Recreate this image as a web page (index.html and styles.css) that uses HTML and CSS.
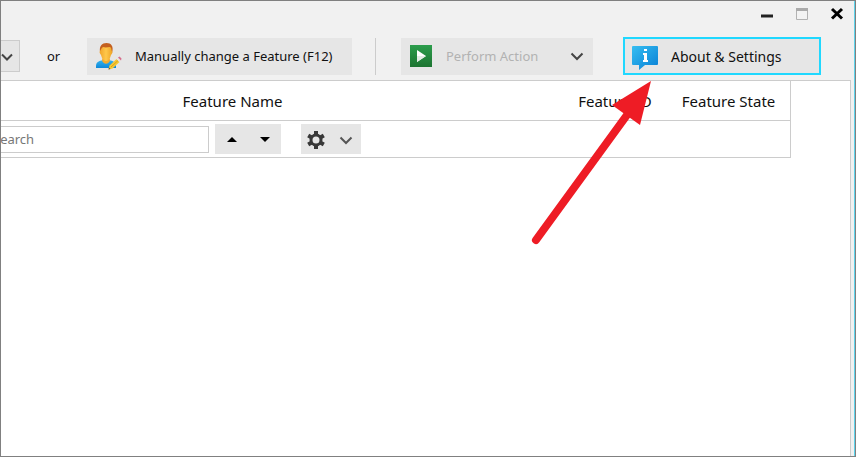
FILE: index.html
```html
<!DOCTYPE html>
<html lang="en">
<head>
<meta charset="utf-8">
<title>Features</title>
<link rel="stylesheet" href="styles.css">
</head>
<body>
<div class="window">
  <header class="titlebar">
    <button class="caption" aria-label="Minimize"><svg width="14" height="14" viewBox="0 0 14 14"><path d="M1 9h12" stroke="#222" stroke-width="3"/></svg></button>
    <button class="caption" aria-label="Maximize" disabled><svg width="14" height="14" viewBox="0 0 14 14"><path d="M1.500 1.500h11v11h-11z" fill="#f3f3f3" stroke="#b2b2b2"/><path d="M1 1h12v3H1z" fill="#aaa"/></svg></button>
    <button class="caption" aria-label="Close"><svg width="14" height="14" viewBox="0 0 14 14"><path d="M2 2l10 9.500M12 2L2 11.500" stroke="#000" stroke-width="3"/></svg></button>
  </header>
  <div class="toolbar">
    <div class="picker">
      <select class="picker-select" aria-label="Feature preset"><option></option></select>
      <svg class="picker-arrow" width="14" height="14" viewBox="0 0 14 14"><path d="M2 4.500l5 5 5-5" fill="none" stroke="#444" stroke-width="2"/></svg>
    </div>
    <span class="or">or</span>
    <button class="tool manual">
      <svg width="28" height="28" viewBox="0 0 28 28">
        <defs>
          <linearGradient id="face" x2="1" y2="0"><stop stop-color="#f0a32a"/><stop offset=".5" stop-color="#ffc84b"/><stop offset="1" stop-color="#eda225"/></linearGradient>
          <linearGradient id="shirt" x2="0" y2="1"><stop stop-color="#35b4ee"/><stop offset="1" stop-color="#0e88d9"/></linearGradient>
        </defs>
        <path d="M1 26v-2c0-4 3-5 7-6h6c4 1 7 2 7 6v2z" fill="url(#shirt)"/>
        <path d="M7 18l1-3h6l1 3c-1 5-7 5-8 0z" fill="#f2ab2e"/>
        <path d="M5 10C4 4 7 1 11.500 1S19 4 17 11z" fill="#c4601f"/>
        <path d="M5 9c1-1 1-3 3-4 3 1 5 0 7 0 2 1 1 3 2 4 1 1 0 3-1 4-1 4-3 6-5 6s-4-2-5-6c-1-1-2-3-1-4z" fill="url(#face)"/>
        <path d="M13.500 27.500l1-4 7-6.500 3 3-7 6.500z" fill="#f5c832"/>
        <path d="M16 25l7-6.500" stroke="#dda01b"/>
        <path d="M21.500 17l1.500-1.500 3 3-1.500 1.500z" fill="#e8e3e0"/>
        <path d="M23 15.500l1.500-1 2 2-.5 2z" fill="#d66c8b"/>
        <path d="M13.500 27.500l.5-2 1.500 1.500z" fill="#5b5242"/>
      </svg>
      <span>Manually change a Feature (F12)</span>
    </button>
    <span class="separator"></span>
    <button class="tool perform" disabled>
      <svg width="24" height="24" viewBox="0 0 24 24">
        <defs><linearGradient id="green" x2="0" y2="1"><stop stop-color="#2c9d4c"/><stop offset="1" stop-color="#1d7431"/></linearGradient></defs>
        <rect x="1" y="1" width="22" height="22" fill="url(#green)"/><path d="M8 6l9 6-9 6z" fill="#fff"/><path d="M8 12h9l-9 6z" fill="#e3ece5"/>
      </svg>
      <span>Perform Action</span>
      <svg class="chevron" width="14" height="14" viewBox="0 0 14 14"><path d="M1.500 4.500l5.500 5.500 5.500-5.500" fill="none" stroke="#444" stroke-width="2"/></svg>
    </button>
    <button class="tool about">
      <svg width="28" height="28" viewBox="0 0 28 28">
        <defs><linearGradient id="bubble" x2="1" y2="1"><stop stop-color="#36bef1"/><stop offset="1" stop-color="#087fd5"/></linearGradient></defs>
        <path d="M2 4h24q1 0 1 1v17q0 1-1 1H14l-6 5v-5H2q-1 0-1-1V5q0-1 1-1z" fill="url(#bubble)"/>
        <path d="M13 7h3v2h-3zM12 11h4v7h1v2h-5v-2h1v-5h-1z" fill="#fff"/>
      </svg>
      <span>About &amp; Settings</span>
    </button>
  </div>
  <main class="workspace">
    <table class="features">
      <thead>
        <tr><th>Feature Name</th><th class="col-id">Feature ID</th><th class="col-state">Feature State</th></tr>
      </thead>
      <tbody>
        <tr><td colspan="3">
          <div class="filter">
            <input class="search" type="text" placeholder="Search" aria-label="Search">
            <div class="group steps">
              <button class="mini" aria-label="Previous match"><svg width="14" height="14" viewBox="0 0 14 14"><path d="M2 10l5-5 5 5z"/></svg></button>
              <button class="mini" aria-label="Next match"><svg width="14" height="14" viewBox="0 0 14 14"><path d="M2 5l5 5 5-5z"/></svg></button>
            </div>
            <button class="group options" aria-label="Search options">
              <svg width="20" height="20" viewBox="0 0 20 20"><g fill="none" stroke="#383838"><circle cx="10" cy="11" r="5" stroke-width="3"/><path d="M10 2v4M10 16v4M2.200 6.500l3.500 2M14.300 13.500l3.500 2M2.200 15.500l3.500-2M14.300 8.500l3.500-2" stroke-width="4"/></g></svg>
              <svg width="14" height="14" viewBox="0 0 14 14"><path d="M1.500 5.500l5.500 5.500 5.500-5.500" fill="none" stroke="#555" stroke-width="2"/></svg>
            </button>
          </div>
        </td></tr>
      </tbody>
    </table>
  </main>
  <svg class="pointer" width="124" height="170" viewBox="0 0 124 170" aria-hidden="true">
    <path d="M6 162L97 37" stroke="#ee1c25" stroke-width="8" stroke-linecap="round"/>
    <path d="M121 3L82 27l28 20z" fill="#ee1c25"/>
  </svg>
</div>
</body>
</html>
```
FILE: styles.css
```css
* { box-sizing: border-box; }
body { margin: 0; font-family: "Noto Sans", sans-serif; font-size: 13px; color: #111; }
button, input, select { font: inherit; color: inherit; margin: 0; }
button { border: 0; padding: 0; }
svg { display: block; flex: none; }
.window { position: relative; display: flex; flex-direction: column; min-height: 100vh; overflow: hidden; background: #f1f1f1; border: 1px solid #808080; box-shadow: inset -1px 0 #5ed4ec; }
.titlebar { display: flex; justify-content: flex-end; gap: 21px; height: 36px; padding: 6px 11px 0 0; }
.caption { width: 14px; height: 14px; background: none; }
.toolbar { display: flex; align-items: center; height: 38px; margin-bottom: 5px; padding-right: 34px; white-space: nowrap; }
.picker { position: relative; flex: none; width: 119px; margin-left: -100px; }
.picker-select { display: block; width: 100%; height: 32px; appearance: none; background: #e6e6e6; border: 1px solid #ccc; border-radius: 0; }
.picker-arrow { position: absolute; right: 6px; top: 10px; pointer-events: none; }
.or { width: 67px; text-align: center; }
.tool { display: flex; align-items: center; height: 37px; padding: 0 8px; background: #e6e6e6; }
.manual { gap: 12px; width: 265px; }
.separator { width: 1px; height: 37px; margin: 0 25px 0 23px; background: #ccc; }
.perform { gap: 13px; width: 192px; color: #b2b2b2; }
.chevron { margin: 0 1px 0 auto; }
.about { gap: 12px; width: 198px; height: 38px; margin-left: auto; border: 2px solid #20d8ff; padding: 0 6px; font-size: 14px; }
.workspace { flex: 1; margin: 0 4px 0 -100px; padding-right: 59px; background: #fff; border: 1px solid #ccc; border-bottom: 0; }
.features { width: 100%; table-layout: fixed; border-collapse: separate; border-spacing: 0; border-right: 1px solid #ccc; border-bottom: 1px solid #ccc; }
th { height: 40px; padding: 0; border-bottom: 1px solid #ccc; font-size: 15px; font-weight: 400; }
td { padding: 0; }
.col-id { width: 104px; }
.col-state { width: 123px; }
.filter { display: flex; align-items: center; height: 36px; padding-left: 70px; }
.search { width: 237px; height: 27px; padding: 0 0 0 20px; background: #fff; border: 1px solid #ccc; border-radius: 0; }
.search::placeholder { color: #777; opacity: 1; }
.group { display: flex; align-items: center; height: 30px; background: #e6e6e6; }
.steps { width: 66px; margin: 0 20px 0 6px; }
.mini { display: flex; justify-content: center; align-items: center; flex: 1; height: 100%; background: none; }
.options { gap: 13px; width: 60px; padding-left: 5px; }
.pointer { position: absolute; right: 201px; top: 77px; }
```
